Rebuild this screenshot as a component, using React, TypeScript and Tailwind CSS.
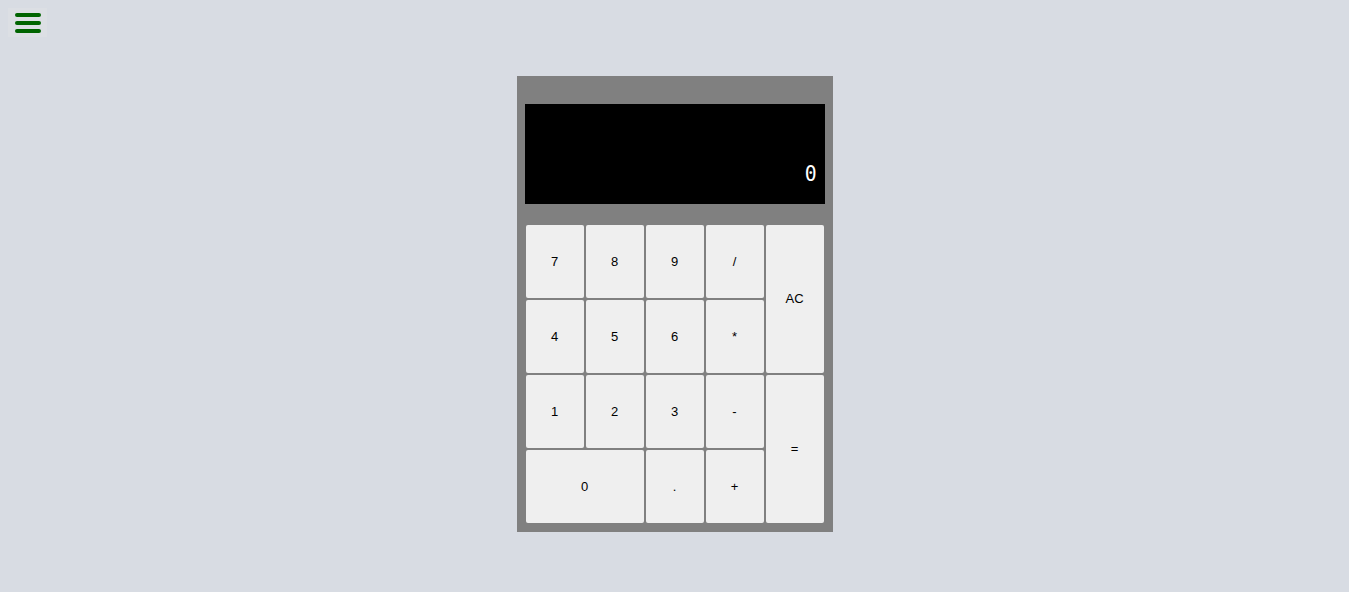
const KEYS: { label: string; span?: string }[] = [
  { label: '7' },
  { label: '8' },
  { label: '9' },
  { label: '/' },
  { label: 'AC', span: 'row-span-2' },
  { label: '4' },
  { label: '5' },
  { label: '6' },
  { label: '*' },
  { label: '1' },
  { label: '2' },
  { label: '3' },
  { label: '-' },
  { label: '=', span: 'row-span-2' },
  { label: '0', span: 'col-span-2' },
  { label: '.' },
  { label: '+' },
];

const App = () => {
  return (
    <div className="w-full min-h-screen bg-[#d8dce3] relative font-['Liberation_Sans',Arial,sans-serif]">
      <button
        type="button"
        className="absolute left-[8px] top-[8px] w-[39px] h-[29px] bg-[#dcdfe4] flex flex-col items-center justify-center gap-[4px]"
      >
        <span className="block w-[26px] h-[4px] rounded-full bg-[#006400]" />
        <span className="block w-[26px] h-[4px] rounded-full bg-[#006400]" />
        <span className="block w-[26px] h-[4px] rounded-full bg-[#006400]" />
      </button>

      <div className="flex justify-center pt-[76px]">
        <div className="w-[316px] bg-[#808080] px-[8px] pt-[28px] pb-[8px]">
          <div className="h-[100px] bg-black flex items-end justify-end px-[7px] pb-[19px]">
            <span className="text-white text-[22px] leading-none font-['DejaVu_Sans_Mono',monospace] scale-x-90">
              0
            </span>
          </div>

          <div className="mt-[20px] grid grid-cols-[repeat(5,60px)] grid-rows-[repeat(4,75px)]">
            {KEYS.map((k) => (
              <button
                key={k.label}
                type="button"
                className={`${k.span ?? ''} m-[1px] rounded-[2px] bg-[#efefef] text-[13px] text-black flex items-center justify-center`}
              >
                {k.label}
              </button>
            ))}
          </div>
        </div>
      </div>
    </div>
  );
};

export default App;
